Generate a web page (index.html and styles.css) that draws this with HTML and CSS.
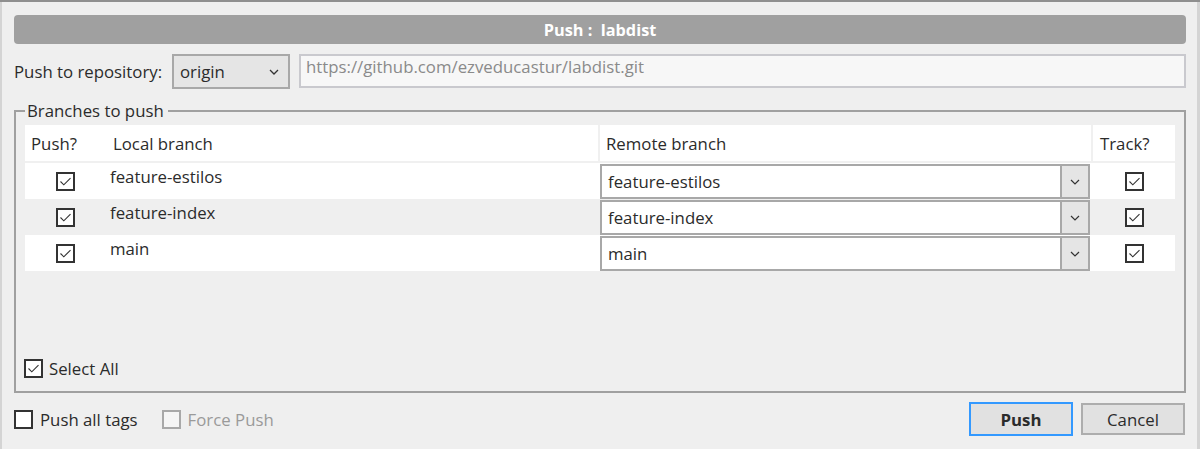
FILE: index.html
```html
<!DOCTYPE html>
<html>
<head>
<meta charset="utf-8">
<link rel="stylesheet" href="styles.css">
</head>
<body>
<div class="topstrip"></div>
<div class="window">
  <div class="titlebar">Push :&nbsp; labdist</div>
  <div class="reporow">
    <span class="label">Push to repository:</span>
    <div class="select origin"><span>origin</span>
      <svg class="chev" width="10" height="6" viewBox="0 0 10 6"><path d="M1 1l4 4 4-4" fill="none" stroke="#333" stroke-width="1.3"/></svg>
    </div>
    <div class="urlbox">https://github.com/ezveducastur/labdist.git</div>
  </div>
  <fieldset class="group">
    <legend>Branches to push</legend>
    <div class="grid">
      <div class="hcell c-push">Push?</div>
      <div class="hcell c-local">Local branch</div>
      <div class="hcell c-remote">Remote branch</div>
      <div class="hcell c-track">Track?</div>

      <div class="cell c-push"><span class="cb checked"><svg viewBox="0 0 15 15"><path d="M2.5 7.5l3.3 3.3 6.7-6.7" fill="none" stroke="#333" stroke-width="1.1"/></svg></span></div>
      <div class="cell c-local"><span class="lname">feature-estilos</span></div>
      <div class="cell c-remote"><div class="combo"><span class="ctext">feature-estilos</span><span class="cbtn"><svg width="10" height="6" viewBox="0 0 10 6"><path d="M1 1l4 4 4-4" fill="none" stroke="#333" stroke-width="1.2"/></svg></span></div></div>
      <div class="cell c-track"><span class="cb checked"><svg viewBox="0 0 15 15"><path d="M2.5 7.5l3.3 3.3 6.7-6.7" fill="none" stroke="#333" stroke-width="1.1"/></svg></span></div>

      <div class="cell alt c-push"><span class="cb checked"><svg viewBox="0 0 15 15"><path d="M2.5 7.5l3.3 3.3 6.7-6.7" fill="none" stroke="#333" stroke-width="1.1"/></svg></span></div>
      <div class="cell alt c-local"><span class="lname">feature-index</span></div>
      <div class="cell alt c-remote"><div class="combo"><span class="ctext">feature-index</span><span class="cbtn"><svg width="10" height="6" viewBox="0 0 10 6"><path d="M1 1l4 4 4-4" fill="none" stroke="#333" stroke-width="1.2"/></svg></span></div></div>
      <div class="cell alt c-track"><span class="cb checked"><svg viewBox="0 0 15 15"><path d="M2.5 7.5l3.3 3.3 6.7-6.7" fill="none" stroke="#333" stroke-width="1.1"/></svg></span></div>

      <div class="cell c-push"><span class="cb checked"><svg viewBox="0 0 15 15"><path d="M2.5 7.5l3.3 3.3 6.7-6.7" fill="none" stroke="#333" stroke-width="1.1"/></svg></span></div>
      <div class="cell c-local"><span class="lname">main</span></div>
      <div class="cell c-remote"><div class="combo"><span class="ctext">main</span><span class="cbtn"><svg width="10" height="6" viewBox="0 0 10 6"><path d="M1 1l4 4 4-4" fill="none" stroke="#333" stroke-width="1.2"/></svg></span></div></div>
      <div class="cell c-track"><span class="cb checked"><svg viewBox="0 0 15 15"><path d="M2.5 7.5l3.3 3.3 6.7-6.7" fill="none" stroke="#333" stroke-width="1.1"/></svg></span></div>
    </div>
    <div class="selectall">
      <span class="cb checked"><svg viewBox="0 0 15 15"><path d="M2.5 7.5l3.3 3.3 6.7-6.7" fill="none" stroke="#333" stroke-width="1.1"/></svg></span>
      <span>Select All</span>
    </div>
  </fieldset>
  <div class="footer">
    <div class="opts">
      <label class="opt"><span class="cb"></span><span>Push all tags</span></label>
      <label class="opt disabled"><span class="cb"></span><span>Force Push</span></label>
    </div>
    <div class="buttons">
      <div class="btn primary">Push</div>
      <div class="btn">Cancel</div>
    </div>
  </div>
</div>
</body>
</html>
```
FILE: styles.css
```css
* { box-sizing: border-box; }
html, body { margin: 0; padding: 0; }
body {
  width: 1200px;
  height: 449px;
  overflow: hidden;
  background: #efefef;
  font-family: "Open Sans", "Noto Sans", sans-serif;
  font-size: 16.8px;
  color: #2b2b2b;
}
.topstrip {
  height: 2px;
  background: #8f8f8f;
}
.window {
  height: 447px;
  border-left: 2px solid #d4d4d4;
  border-right: 3px solid #d4d4d4;
  padding: 13px 11px 0 12px;
  background: #efefef;
}
.titlebar {
  height: 29px;
  background: #a0a0a0;
  border-radius: 4px;
  color: #fff;
  font-weight: bold;
  font-size: 16.3px;
  display: flex;
  align-items: center;
  justify-content: center;
}
.reporow {
  margin-top: 10px;
  height: 35px;
  display: flex;
  align-items: center;
}
.label { width: 158px; white-space: nowrap; }
.select {
  height: 35px;
  border: 2px solid #a8a8a8;
  background: #e5e5e5;
  display: flex;
  align-items: center;
  justify-content: space-between;
  padding: 0 9px 0 6px;
}
.origin { width: 118px; }
.urlbox {
  margin-left: 9px;
  flex: 1;
  height: 34px;
  align-self: flex-start;
  border: 2px solid #c9c9ce;
  background: #f7f7f7;
  color: #8a8a8a;
  padding: 0 5px 7px 5px;
  display: flex;
  align-items: center;
  line-height: 1;
}
.group {
  margin: 11px 0 0 0;
  border: 2px solid #a0a0a0;
  padding: 3px 9px 0 9px;
  height: 293px;
}
.group legend {
  padding: 0 4px 0 2px;
  margin-left: 0;
  line-height: 22px;
}
.grid {
  display: grid;
  grid-template-columns: 80px 493px 493px 84px;
  grid-template-rows: 38px 36px 36px 36px;
}
.hcell {
  background: #fff;
  display: flex;
  align-items: center;
  border-bottom: 2px solid #f0f0f0;
}
.hcell.c-push { padding-left: 6px; }
.hcell.c-local { padding-left: 8px; }
.hcell.c-remote { padding-left: 6px; border-left: 2px solid #f0f0f0; }
.hcell.c-track { padding-left: 7px; border-left: 2px solid #f0f0f0; }
.cell {
  background: #fff;
  display: flex;
  align-items: center;
}
.cell.alt { background: #efefef; }
.cell.c-push { justify-content: center; padding-left: 1px; padding-top: 1px; }
.cell.c-local { padding-left: 5px; }
.cell.c-local .lname { margin-top: -10px; }
.cell.c-remote { padding: 1px 0 0 2px; }
.cell.c-track { justify-content: center; padding-left: 2px; }
.cb {
  width: 19px;
  height: 19px;
  border: 2px solid #333;
  background: #fff;
  display: inline-flex;
  align-items: center;
  justify-content: center;
  flex: none;
}
.cb svg { width: 15px; height: 15px; }
.combo {
  width: 490px;
  height: 35px;
  border: 2px solid #a8a8a8;
  background: #fff;
  display: flex;
  align-items: stretch;
}
.ctext {
  flex: 1;
  display: flex;
  align-items: center;
  padding-left: 6px;
}
.cbtn {
  width: 28px;
  background: #e5e5e5;
  border-left: 2px solid #a8a8a8;
  display: flex;
  align-items: center;
  justify-content: center;
}
.selectall {
  margin-top: 86px;
  margin-left: -1px;
  display: flex;
  align-items: center;
  gap: 6px;
}
.footer {
  margin-top: 9px;
  display: flex;
  justify-content: space-between;
  align-items: center;
}
.opts { display: flex; align-items: center; gap: 24px; padding-top: 1px; }
.opt { display: flex; align-items: center; gap: 7px; }
.opt.disabled { color: #9a9a9a; }
.opt.disabled .cb { border-color: #a8a8a8; background: #f5f5f5; }
.buttons { display: flex; gap: 8px; align-items: center; }
.btn {
  width: 104px;
  height: 32px;
  border: 2px solid #adadad;
  background: #e1e1e1;
  display: flex;
  align-items: center;
  justify-content: center;
  margin-right: 1px;
}
.btn.primary {
  height: 34px;
  border-color: #3399ff;
  font-weight: bold;
  margin-right: 0;
}
```
